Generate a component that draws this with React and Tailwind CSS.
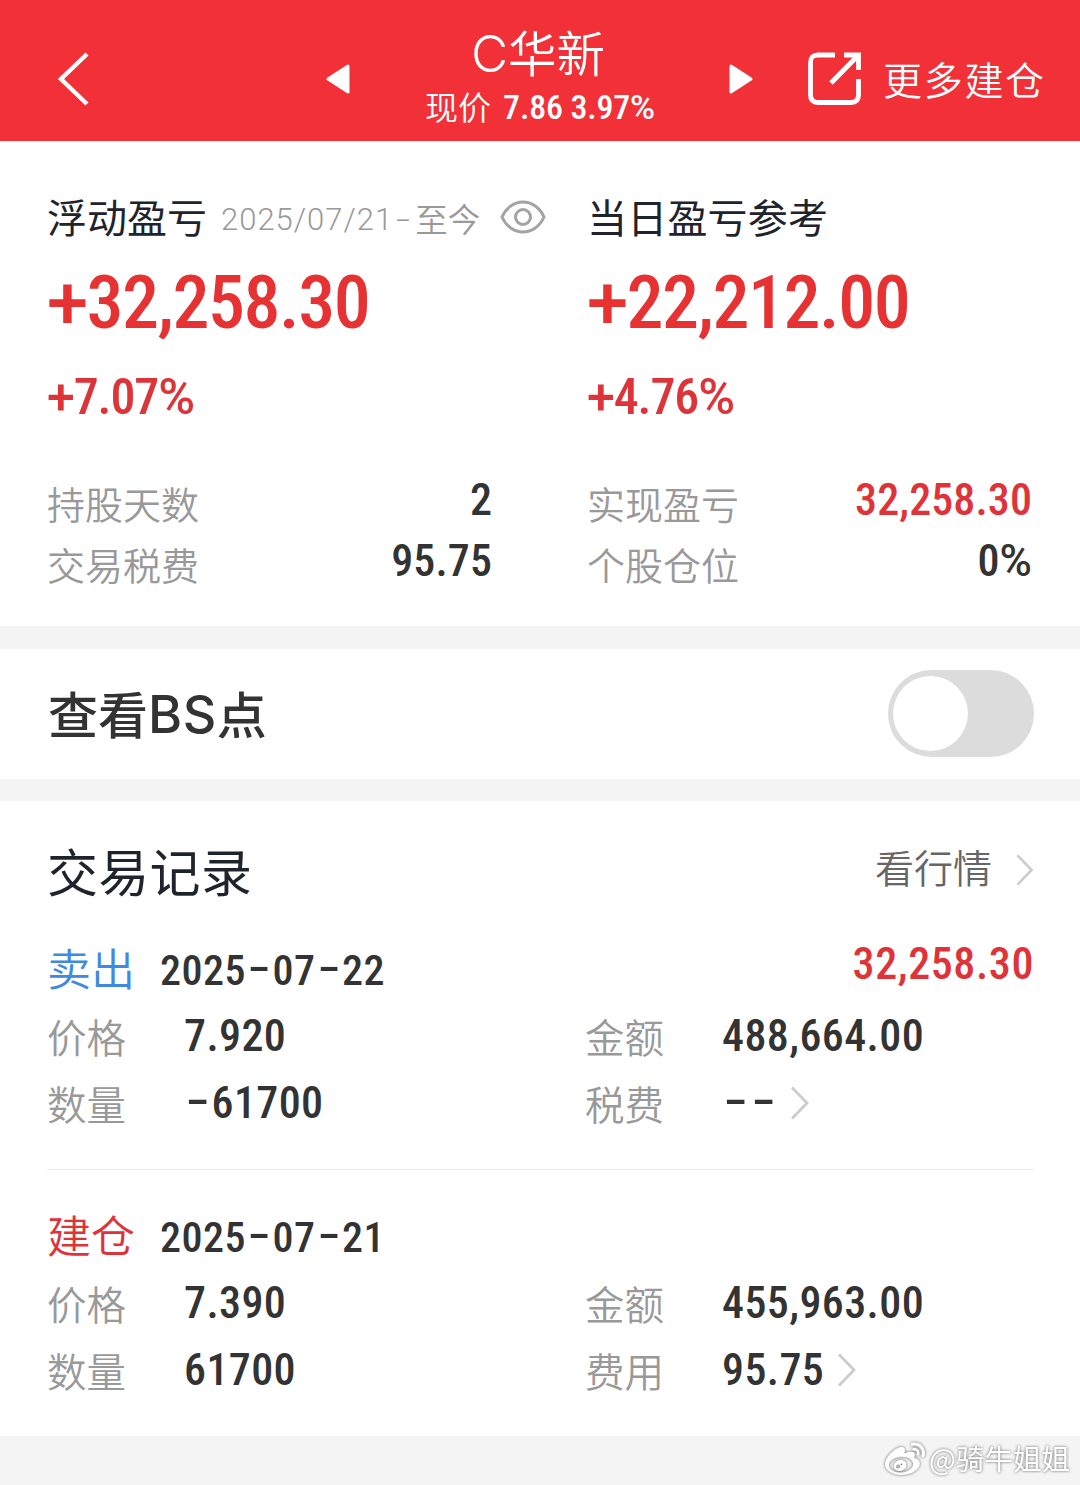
import React from "react";
import { FaWeibo } from "react-icons/fa";

const cjk = "font-['Noto_Sans_CJK_SC',sans-serif]";
const num = "font-['Roboto_Condensed',Roboto,sans-serif] font-medium whitespace-nowrap";

function Chevron({ className }) {
  return (
    <svg viewBox="0 0 18 34" className={className} fill="none" stroke="#cccccc" strokeWidth="2.8">
      <path d="M1 1.5 L16 17 L1 32.5" />
    </svg>
  );
}

// Number text: signs and percent marks use the wider cut, hyphens are stretched to digit width.
function Num({ text, dash }) {
  return text.split(/([-+%])/).map((part, i) => {
    if (part === "-") {
      return (
        <span key={i} className={`inline-block -translate-y-[3px] scale-x-180 text-center tracking-normal ${dash}`}>
          -
        </span>
      );
    }
    if (part === "+" || part === "%") {
      return (
        <span key={i} className="font-[Roboto,sans-serif]">
          {part}
        </span>
      );
    }
    return part;
  });
}

function Stat({ label, value, className }) {
  return (
    <div className="flex h-[61px] items-center justify-between">
      <span className={`${cjk} text-[38px] font-[350] text-[#999999]`}>{label}</span>
      <span className={`${num} pb-1.5 text-[44px] leading-none tracking-[0.1px] ${className}`}>
        <Num text={value} />
      </span>
    </div>
  );
}

function Summary({ heading, amount, percent, children }) {
  return (
    <div>
      <div className="flex h-[50px] items-center whitespace-nowrap">{heading}</div>
      <div className={`${num} mt-[22px] h-20 text-[74px] leading-[82px] tracking-[-1.5px] text-[#e63232]`}>
        <Num text={amount} />
      </div>
      <div className={`${num} mt-[30px] h-[50px] text-[50px] leading-[50px] tracking-[-1.1px] text-[#dc3439]`}>
        <Num text={percent} />
      </div>
      <div className="mt-[50px]">{children}</div>
    </div>
  );
}

function Field({ label, value, link }) {
  return (
    <div className="flex h-[67px] items-center">
      <span className={`${cjk} w-[137px] shrink-0 text-[39.5px] leading-none font-[350] text-[#999999]`}>{label}</span>
      <span className={`${num} text-[44px] leading-none tracking-[0.4px] text-[#333333]`}>
        <Num text={value} dash="w-[27.5px]" />
      </span>
      {link && <Chevron className="ml-3.5 h-[34px] w-[18px]" />}
    </div>
  );
}

function Trade({ type, typeClass, date, profit, fields }) {
  return (
    <div>
      <div className="flex h-[60px] items-center">
        <span className={`${cjk} w-[113px] pb-0.5 text-[44px] leading-none font-[350] ${typeClass}`}>{type}</span>
        <span className={`${num} pt-1.5 text-[42px] leading-none tracking-[0.5px] text-[#333333]`}>
          <Num text={date} dash="w-[26.5px]" />
        </span>
        {profit && (
          <span className={`${num} ml-auto pb-2 text-[44px] leading-none tracking-[0.6px] text-[#de3338]`}>{profit}</span>
        )}
      </div>
      <div className="mt-1 grid grid-cols-[538px_1fr]">
        {fields.map((f) => (
          <Field key={f.label} {...f} />
        ))}
      </div>
    </div>
  );
}

export default function App() {
  return (
    <div className={`${cjk} flex h-[1485px] w-[1080px] flex-col overflow-hidden bg-[#f4f4f4]`}>
      <header className="flex h-[141px] shrink-0 items-center bg-[#f23038] text-white">
        <svg viewBox="0 0 32 54" className="mt-4 ml-[57px] h-[54px] w-8" fill="none" stroke="white" strokeWidth="4.4">
          <path d="M30 2 L4 27 L30 52" />
        </svg>
        <svg viewBox="0 0 26 32" className="mt-4 ml-[236px] h-8 w-[26px]" fill="white" stroke="white" strokeWidth="3" strokeLinejoin="round">
          <path d="M3 16 L23 3 V29 Z" />
        </svg>
        <div className="ml-[49px] flex w-[280px] flex-col items-center pt-4">
          <div className="flex h-[56px] items-center pr-1 text-[48.5px] leading-none font-[350]">
            <span className="pt-1 font-[Inter,sans-serif] text-[51px] leading-none font-light">C</span>
            <span>华新</span>
          </div>
          <div className="flex h-[54px] items-center">
            <span className="pr-3 text-[33px] leading-none font-[350]">现价</span>
            <span className={`${num} pt-px text-[34px] leading-none tracking-[-0.2px]`}>
              <Num text="7.86 3.97%" />
            </span>
          </div>
        </div>
        <svg viewBox="0 0 26 32" className="mt-4 ml-[48px] h-8 w-[26px]" fill="white" stroke="white" strokeWidth="3" strokeLinejoin="round">
          <path d="M23 16 L3 3 V29 Z" />
        </svg>
        <svg viewBox="0 0 56 56" className="mt-4 ml-[53px] size-14 shrink-0" fill="none" stroke="white" strokeWidth="4.8">
          <path d="M28 4 H11 Q3.5 4 3.5 11.5 V44 Q3.5 51.5 11 51.5 H44 Q51.5 51.5 51.5 44 V28" />
          <path d="M37 4 H51.5 V19 M50 5.5 L24 32" />
          <path d="M44 4 H51.5 V11.5 Z" fill="white" stroke="none" />
        </svg>
        <span className="mt-4 ml-[20px] text-[39px] leading-none font-[350] tracking-[1.7px] whitespace-nowrap">更多建仓</span>
      </header>

      <section className="grid h-[485px] shrink-0 grid-cols-[445px_445px] gap-x-[95px] bg-white pt-[49px] pl-[47px]">
        <Summary
          heading={
            <>
              <span className="pt-0.5 text-[40px] leading-none text-[#1f232b]">浮动盈亏</span>
              <span className="flex items-center pt-1.5 pl-[14px] text-[32.5px] leading-none font-[350] text-[#999999]">
                <span className="pt-0.5 font-[Roboto,sans-serif] text-[31px] leading-none font-[350] tracking-[1px]">
                  <span>2025/07/21</span>
                  <span className="inline-block w-[22px] scale-x-160 text-center">-</span>
                </span>
                至今
              </span>
              <svg viewBox="0 0 46 34" className="mt-1 ml-5 h-[34px] w-[46px] shrink-0" fill="none" stroke="#a3a3a3" strokeWidth="3">
                <path d="M2 17 C11 -3 35 -3 44 17 C35 37 11 37 2 17 Z" />
                <circle cx="23" cy="17" r="7.5" />
              </svg>
            </>
          }
          amount="+32,258.30"
          percent="+7.07%"
        >
          <Stat label="持股天数" value="2" className="text-[#333333]" />
          <Stat label="交易税费" value="95.75" className="text-[#333333]" />
        </Summary>
        <Summary
          heading={<span className="pt-0.5 text-[40px] leading-none tracking-[0.2px] text-[#1f232b]">当日盈亏参考</span>}
          amount="+22,212.00"
          percent="+4.76%"
        >
          <Stat label="实现盈亏" value="32,258.30" className="text-[#de3338]" />
          <Stat label="个股仓位" value="0%" className="text-[#333333]" />
        </Summary>
      </section>

      <section className="mt-[23px] flex h-[130px] shrink-0 items-center justify-between bg-white pr-[46px] pb-px pl-12">
        <h2 className="flex items-center pb-1 text-[50px] leading-none font-medium text-[#333333]">
          查看<span className="pt-1.5 font-[Inter,sans-serif] text-[52px] leading-none tracking-[0.5px]">BS</span>点
        </h2>
        <button className="flex h-[87px] w-[146px] items-center rounded-full bg-[#dcdcdc] p-[5px]">
          <span className="size-[75px] rounded-full bg-white" />
        </button>
      </section>

      <section className="mt-[22px] h-[635px] shrink-0 bg-white pt-[39px] pr-[46px] pl-[47px]">
        <div className="mb-10 flex h-[58px] items-center justify-between">
          <h2 className="pt-0.5 text-[51px] leading-none font-normal tracking-[0.3px] text-[#1f232b]">交易记录</h2>
          <div className="flex items-center">
            <span className="pb-1.5 text-[39px] leading-none font-[350] text-[#666666]">看行情</span>
            <Chevron className="mt-0.5 ml-6 h-8 w-[18px]" />
          </div>
        </div>
        <Trade
          type="卖出"
          typeClass="text-[#3f8ae0]"
          date="2025-07-22"
          profit="32,258.30"
          fields={[
            { label: "价格", value: "7.920" },
            { label: "金额", value: "488,664.00" },
            { label: "数量", value: "-61700" },
            { label: "税费", value: "--", link: true },
          ]}
        />
        <div className="mt-[33px] mb-[35px] h-px bg-[#ececec]" />
        <Trade
          type="建仓"
          typeClass="text-[#de3338]"
          date="2025-07-21"
          fields={[
            { label: "价格", value: "7.390" },
            { label: "金额", value: "455,963.00" },
            { label: "数量", value: "61700" },
            { label: "费用", value: "95.75", link: true },
          ]}
        />
      </section>

      <footer className="flex flex-1 items-center justify-end gap-1 pr-2.5 text-white drop-shadow-[0_0_1.5px_rgba(0,0,0,0.6)]">
        <FaWeibo className="mb-0.5 size-10" />
        <span className="pb-1 text-[28.5px] leading-none">@骑牛姐姐</span>
      </footer>
    </div>
  );
}
